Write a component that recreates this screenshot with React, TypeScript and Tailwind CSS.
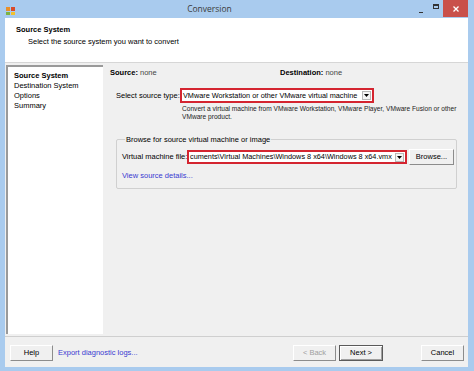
import React from "react";

const navItems = ["Source System", "Destination System", "Options", "Summary"];

function WinButton({
  label,
  disabled,
  primary,
  className = "",
}: {
  label: string;
  disabled?: boolean;
  primary?: boolean;
  className?: string;
}) {
  return (
    <button
      className={
        "h-[16px] w-[43px] bg-[#f0f0f0] text-[7.5px] leading-none flex items-center justify-center border " +
        (primary
          ? "border-[#5a5a5a] shadow-[inset_1px_1px_0_#ffffff,inset_-1px_-1px_0_#a0a0a0] "
          : "border-t-white border-l-white border-r-[#8c8c8c] border-b-[#8c8c8c] ") +
        (disabled ? "text-[#a0a0a0] " : "text-black ") +
        className
      }
    >
      {label}
    </button>
  );
}

function ComboArrow() {
  return (
    <span className="w-[9px] h-[9px] shrink-0 bg-[#f4f4f4] border border-[#b8b8b8] flex items-center justify-center">
      <svg width="5" height="3" viewBox="0 0 5 3">
        <path d="M0 0 H5 L2.5 3 Z" fill="#000" />
      </svg>
    </span>
  );
}

export default function App() {
  return (
    <div className="w-[474px] h-[371px] bg-[#a9cbee] flex flex-col overflow-hidden font-['Liberation_Sans',Arial,sans-serif] text-[7.5px] text-black whitespace-nowrap">
      {/* Title bar */}
      <div className="h-[18px] flex items-start relative">
        <div className="ml-[6px] mt-[7px] w-[9px] h-[8px] grid grid-cols-2 gap-[1px]">
          <span className="bg-[#e8902a]" />
          <span className="bg-[#d94a2a]" />
          <span className="bg-[#7cb342]" />
          <span className="bg-[#f2c12e]" />
        </div>
        <div className="flex-1 text-center text-[8.5px] leading-[18px] text-[#3c3c3c] font-['Open_Sans',sans-serif] -ml-[15px]">
          Conversion
        </div>
        <div className="flex items-start">
          <span className="mt-[12px] w-[4px] h-[1px] bg-[#333]" />
          <span className="ml-[10px] mt-[4px] w-[6px] h-[5px] border border-[#333] border-t-2" />
          <span className="ml-[4px] w-[25px] h-[17px] bg-[#c9504a] flex items-center justify-center mr-[6px]">
            <svg width="6" height="6" viewBox="0 0 6 6">
              <path d="M0.5 0.5 L5.5 5.5 M5.5 0.5 L0.5 5.5" stroke="#fff" strokeWidth="1.3" />
            </svg>
          </span>
        </div>
      </div>

      {/* Client area */}
      <div className="ml-[5px] mr-[6px] h-[349px] bg-[#f0f0f0] flex flex-col">
        {/* Header */}
        <div className="h-[45px] bg-white border-b border-[#d6d6d6] pl-[11px] pt-[7px]">
          <div className="font-bold leading-[10px]">Source System</div>
          <div className="pl-[12px] mt-[2px] leading-[10px]">Select the source system you want to convert</div>
        </div>

        {/* Body */}
        <div className="h-[274px] flex border-b border-[#cfcfcf]">
          <div className="ml-[1px] mt-[2px] mb-[2px] w-[97px] bg-white border-l-2 border-t-2 border-[#9a9a9a] pl-[6px] pt-[4px]">
            {navItems.map((item, i) => (
              <div key={item} className={"leading-[10px] " + (i === 0 ? "font-bold" : "")}>
                {item}
              </div>
            ))}
          </div>

          <div className="flex-1 pl-[7px] pt-[5px]">
            <div className="flex leading-[10px]">
              <div className="w-[170px]">
                <span className="font-bold">Source:</span> <span className="text-[#444]">none</span>
              </div>
              <div>
                <span className="font-bold">Destination:</span> <span className="text-[#444]">none</span>
              </div>
            </div>

            <div className="flex items-center mt-[10px] ml-[6px]">
              <span className="w-[64px] leading-[10px]">Select source type:</span>
              <div className="w-[194px] h-[15px] bg-white border-2 border-[#d42530] flex items-center justify-between pl-[1px] pr-[1px]">
                <span className="text-[7.3px] leading-none">VMware Workstation or other VMware virtual machine</span>
                <ComboArrow />
              </div>
            </div>

            <div className="ml-[72px] mt-[2px] text-[6.6px] leading-[8px] text-[#222]">
              <div>Convert a virtual machine from VMware Workstation, VMware Player, VMware Fusion or other</div>
              <div>VMware product.</div>
            </div>

            <fieldset className="ml-[6px] mt-[14px] w-[341px] h-[54px] border border-[#d0d0d0] rounded-[2px] pl-[5px]">
              <legend className="ml-[3px] px-[1px] leading-[9px]">Browse for source virtual machine or image</legend>
              <div className="flex items-center mt-[5px]">
                <span className="w-[65px] leading-[10px]">Virtual machine file:</span>
                <div className="w-[220px] h-[14px] bg-white border-2 border-[#d42530] flex items-center justify-between pl-[1px] pr-[1px] overflow-hidden">
                  <span className="text-[7.3px] leading-none">cuments\Virtual Machines\Windows 8 x64\Windows 8 x64.vmx</span>
                  <ComboArrow />
                </div>
                <WinButton label="Browse..." className="ml-[2px] w-[45px] h-[14px]" />
              </div>
              <div className="mt-[6px] text-[#3a3ad0] leading-[10px]">View source details...</div>
            </fieldset>
          </div>
        </div>

        {/* Footer */}
        <div className="flex items-start pt-[8px] pl-[5px]">
          <WinButton label="Help" />
          <span className="ml-[5px] mt-[3px] text-[#3a3ad0] leading-[10px]">Export diagnostic logs...</span>
          <div className="flex-1" />
          <WinButton label="< Back" disabled />
          <WinButton label="Next >" primary className="ml-[3px] w-[44px]" />
          <WinButton label="Cancel" className="ml-[38px] mr-[4px]" />
        </div>
      </div>
    </div>
  );
}
